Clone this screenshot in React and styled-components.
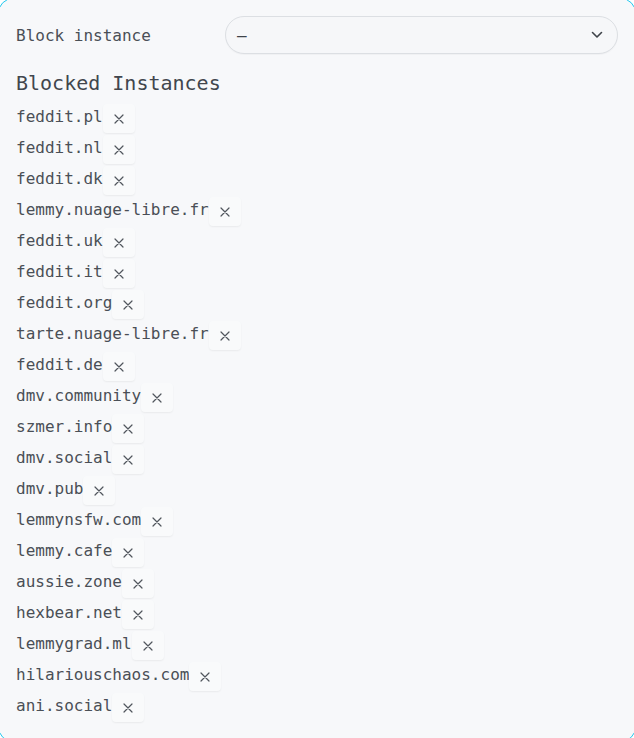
import React from "react";
import styled, { createGlobalStyle } from "styled-components";

const Global = createGlobalStyle`
  html, body { margin: 0; padding: 0; background: #ffffff; }
  body { font-family: "DejaVu Sans Mono", "Liberation Mono", monospace; overflow: hidden; }
  * { box-sizing: border-box; }
`;

const Card = styled.div`
  margin: -2px;
  min-height: 744px;
  border: 1px solid #22c8ee;
  border-radius: 15px;
  background: #f7f8fa;
  padding: 17px 17px 16px 17px;
  color: #4a4f56;
`;

const TopRow = styled.div`
  display: flex;
  align-items: center;
  height: 38px;
`;

const Label = styled.label`
  width: 209px;
  font-size: 16px;
  line-height: 20px;
  margin-top: 2px;
  color: #4a4f56;
`;

const Select = styled.div`
  flex: 1;
  height: 38px;
  border: 1px solid #dcdfe3;
  border-radius: 19px;
  background: #f6f7f9;
  display: flex;
  align-items: center;
  justify-content: space-between;
  padding: 0 14px 0 11px;
  font-size: 16px;
  color: #3e4349;
  box-shadow: 0 1px 1px rgba(0, 0, 0, 0.03);
`;

const Heading = styled.h2`
  margin: 17px 0 9px 0;
  font-size: 20px;
  line-height: 24px;
  font-weight: 400;
  color: #41464d;
`;

const List = styled.ul`
  list-style: none;
  margin: 0;
  padding: 0;
  display: flex;
  flex-direction: column;
  gap: 3px;
`;

const Row = styled.li`
  display: flex;
  align-items: center;
  height: 28px;
`;

const Name = styled.span`
  font-size: 16px;
  line-height: 20px;
  color: #4a4f56;
  margin-top: -3px;
`;

const RemoveBtn = styled.button`
  width: 32px;
  height: 29px;
  margin-top: 1px;
  border: none;
  border-radius: 4px;
  background: #f9fafb;
  box-shadow: 0 1px 2px rgba(0, 0, 0, 0.06);
  display: flex;
  align-items: center;
  justify-content: center;
  padding: 0;
  cursor: pointer;
`;

const XIcon = () => (
  <svg width="10" height="10" viewBox="0 0 10 10">
    <path d="M1 1 L9 9 M9 1 L1 9" stroke="#51565d" strokeWidth="1.2" strokeLinecap="round" />
  </svg>
);

const Chevron = () => (
  <svg width="12" height="8" viewBox="0 0 12 8">
    <path d="M1.5 1.5 L6 6 L10.5 1.5" stroke="#3e4349" strokeWidth="1.6" fill="none" strokeLinecap="round" strokeLinejoin="round" />
  </svg>
);

const instances = [
  "feddit.pl",
  "feddit.nl",
  "feddit.dk",
  "lemmy.nuage-libre.fr",
  "feddit.uk",
  "feddit.it",
  "feddit.org",
  "tarte.nuage-libre.fr",
  "feddit.de",
  "dmv.community",
  "szmer.info",
  "dmv.social",
  "dmv.pub",
  "lemmynsfw.com",
  "lemmy.cafe",
  "aussie.zone",
  "hexbear.net",
  "lemmygrad.ml",
  "hilariouschaos.com",
  "ani.social",
];

export default function App() {
  return (
    <>
      <Global />
      <Card>
        <TopRow>
          <Label>Block instance</Label>
          <Select>
            <span>–</span>
            <Chevron />
          </Select>
        </TopRow>
        <Heading>Blocked Instances</Heading>
        <List>
          {instances.map((name) => (
            <Row key={name}>
              <Name>{name}</Name>
              <RemoveBtn aria-label={`Unblock ${name}`}>
                <XIcon />
              </RemoveBtn>
            </Row>
          ))}
        </List>
      </Card>
    </>
  );
}
